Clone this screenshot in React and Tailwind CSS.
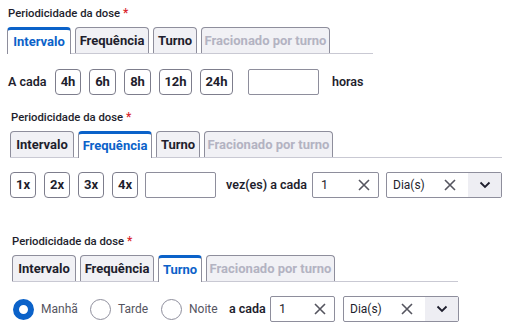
import React from "react";

const tabs = [
  { t: "Intervalo", w: "w-[64px]" },
  { t: "Frequência", w: "w-[74px]" },
  { t: "Turno", w: "w-[44px]" },
  { t: "Fracionado por turno", w: "w-[129px]" },
];

function Label() {
  return (
    <div className="text-[11.3px] leading-[16px] font-medium text-[#1e1e2d] whitespace-nowrap">
      Periodicidade da dose <span className="text-[#d9262c] text-[12px]">*</span>
    </div>
  );
}

function Tabs({ active, width }) {
  return (
    <div className={`flex gap-[4px] border-b border-[#c9c9d3] mt-[5px] ${width}`}>
      {tabs.map((tab, i) => {
        const isActive = i === active;
        const disabled = i === 3;
        return (
          <div
            key={tab.t}
            className={
              isActive
                ? `${tab.w} shrink-0 whitespace-nowrap h-[27px] -mb-px flex items-center justify-center bg-white border-x border-[#8e8e9c] border-t-[3px] border-t-[#0b62c9] rounded-t-[4px] text-[13px] font-bold text-[#0b62c9]`
                : `${tab.w} shrink-0 whitespace-nowrap h-[26px] flex items-center justify-center bg-[#f1f1f5] border border-b-0 border-[#8e8e9c] rounded-t-[4px] text-[13px] font-bold ${disabled ? "text-[#b3b3c2]" : "text-[#1e1e2d]"}`
            }
          >
            {tab.t}
          </div>
        );
      })}
    </div>
  );
}

function Chip({ children, w }) {
  return (
    <div className={`h-[26px] ${w} shrink-0 flex items-center justify-center border border-[#7d7d8c] rounded-[4px] text-[13px] font-bold text-[#1e1e2d]`}>
      {children}
    </div>
  );
}

function X() {
  return (
    <svg width="12" height="12" viewBox="0 0 12 12" className="text-[#55555f]">
      <path d="M1 1L11 11M11 1L1 11" stroke="currentColor" strokeWidth="1.6" />
    </svg>
  );
}

function NumInput({ w }) {
  return (
    <div className={`h-[26px] ${w} shrink-0 flex items-center justify-between pl-[8px] pr-[8px] border border-[#8e8e9c] rounded-[2px] text-[12.5px] text-[#1e1e2d]`}>
      <span>1</span>
      <X />
    </div>
  );
}

function Select() {
  return (
    <div className="h-[26px] w-[116px] shrink-0 flex border border-[#8e8e9c] rounded-[2px] text-[12px] text-[#1e1e2d]">
      <div className="flex-1 flex items-center justify-between pl-[6px] pr-[12px]">
        <span>Dia(s)</span>
        <X />
      </div>
      <div className="w-[33px] bg-[#eeeef3] flex items-center justify-center">
        <svg width="12" height="8" viewBox="0 0 12 8">
          <path d="M1.5 1.5L6 6L10.5 1.5" stroke="#1e1e2d" strokeWidth="1.8" fill="none" />
        </svg>
      </div>
    </div>
  );
}

function Radio({ checked, label, w }) {
  return (
    <div className={`${w} shrink-0 flex items-center gap-[7px]`}>
      {checked ? (
        <div className="w-[21px] h-[21px] rounded-full border-[6.5px] border-[#0b62c9] bg-white" />
      ) : (
        <div className="w-[21px] h-[21px] rounded-full border border-[#8e8e9c] bg-white" />
      )}
      <span className="text-[12px] text-[#55555f]">{label}</span>
    </div>
  );
}

export default function App() {
  return (
    <div className="w-[507px] h-[334px] bg-white overflow-hidden font-['Roboto',sans-serif]">
      {/* Intervalo */}
      <div className="pl-[7px] pt-[5px]">
        <div className="pl-[1px]"><Label /></div>
        <Tabs active={0} width="w-[366px]" />
        <div className="flex items-center mt-[15px] pl-[1px] whitespace-nowrap">
          <span className="w-[47px] text-[12.5px] font-semibold text-[#1e1e2d]">A cada</span>
          <div className="flex gap-[8px]">
            <Chip w="w-[26px]">4h</Chip>
            <Chip w="w-[27px]">6h</Chip>
            <Chip w="w-[27px]">8h</Chip>
            <Chip w="w-[33px]">12h</Chip>
            <Chip w="w-[33px]">24h</Chip>
          </div>
          <div className="ml-[15px] h-[26px] w-[71px] border border-[#8e8e9c] rounded-[2px]" />
          <span className="ml-[13px] text-[12.5px] font-semibold text-[#1e1e2d]">horas</span>
        </div>
      </div>

      {/* Frequência */}
      <div className="pl-[10px] pt-[14px]">
        <div className="pl-[1px]"><Label /></div>
        <Tabs active={1} width="w-[492px]" />
        <div className="flex items-center mt-[14px] whitespace-nowrap">
          <div className="flex gap-[8px]">
            <Chip w="w-[26px]">1x</Chip>
            <Chip w="w-[26px]">2x</Chip>
            <Chip w="w-[26px]">3x</Chip>
            <Chip w="w-[26px]">4x</Chip>
          </div>
          <div className="ml-[7px] h-[26px] w-[71px] border border-[#8e8e9c] rounded-[2px]" />
          <span className="ml-[10px] text-[12.5px] font-semibold text-[#1e1e2d]">vez(es) a cada</span>
          <div className="ml-auto mr-[5px] flex gap-[7px]">
            <NumInput w="w-[67px]" />
            <Select />
          </div>
        </div>
      </div>

      {/* Turno */}
      <div className="pl-[12px] pt-[35px]">
        <Label />
        <Tabs active={2} width="w-[446px]" />
        <div className="flex items-center mt-[14px] pl-[1px] whitespace-nowrap">
          <Radio checked label="Manhã" w="w-[77px]" />
          <Radio label="Tarde" w="w-[71px]" />
          <Radio label="Noite" w="w-[68px]" />
          <span className="w-[41px] shrink-0 text-[12.5px] font-semibold text-[#1e1e2d]">a cada</span>
          <div className="flex gap-[8px]">
            <NumInput w="w-[65px]" />
            <Select />
          </div>
        </div>
      </div>
    </div>
  );
}
